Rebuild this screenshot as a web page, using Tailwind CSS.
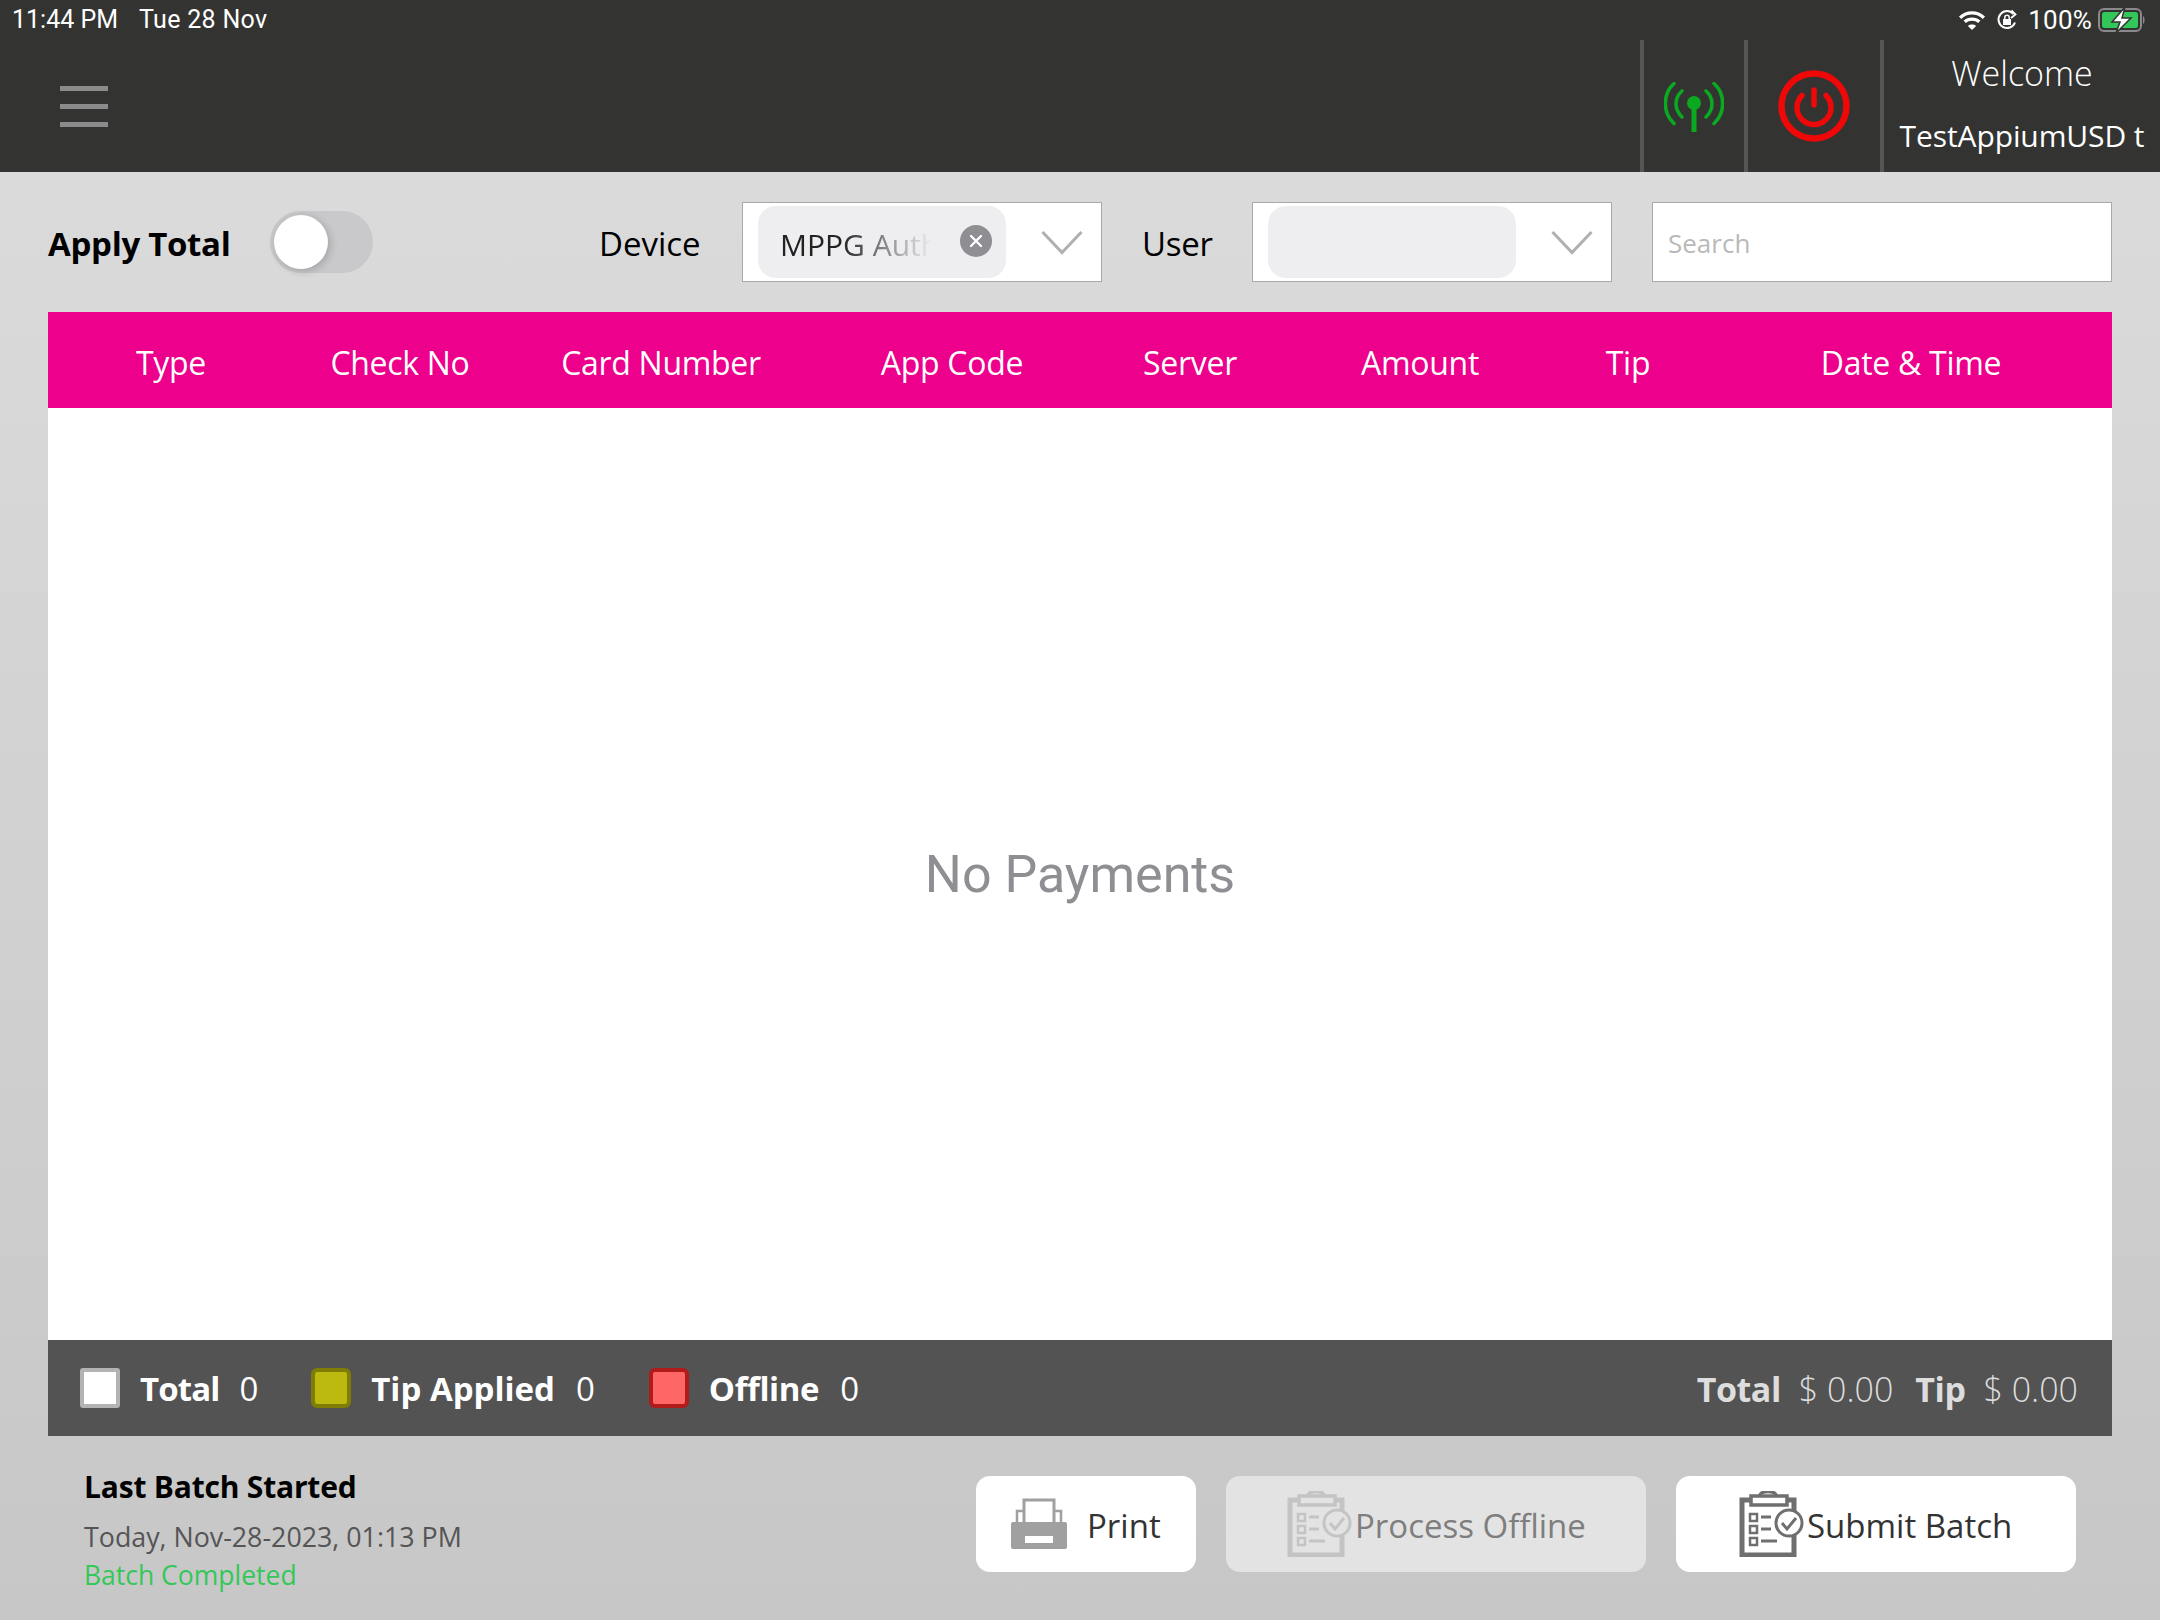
<!DOCTYPE html>
<html><head><meta charset="utf-8"><script src="https://cdn.jsdelivr.net/npm/@tailwindcss/browser@4"></script></head>
<body class="m-0">
<div class="w-[2160px] h-[1620px] flex flex-col overflow-hidden font-['Open_Sans',sans-serif] bg-gradient-to-b from-[#dddddd] to-[#c7c7c7] text-black">
  <header class="h-[172px] shrink-0 bg-[#333332] relative flex">
    <div class="absolute left-[12px] top-[4px] h-[32px] flex items-center gap-[21px] text-[25px] text-white font-['Roboto',sans-serif]"><span>11:44 PM</span><span class="tracking-[0.3px]">Tue 28 Nov</span></div>
    <div class="absolute right-[14px] top-[4px] h-[32px] flex items-center text-white">
      <svg class="w-[28px] h-[22px] mr-[10px]" viewBox="0 0 30 24" fill="none" stroke="#fff" stroke-width="3.6"><path d="M2 9.500C9.500 2.500 20.500 2.500 28 9.500"/><path d="M7 14C11.500 10 18.500 10 23 14"/><path d="M15 23l-4.500-4.500c2.500-2 6.500-2 9 0z" fill="#fff" stroke="none"/></svg>
      <svg class="w-[22px] h-[22px] mr-[10px]" viewBox="0 0 22 22" fill="none" stroke="#fff" stroke-width="2"><path d="M19 13.500A8.500 8.500 0 1 1 17.500 5"/><path d="M15.500 1.500L19.500 5.500 15 9" stroke-width="1.800"/><rect x="7" y="10" width="8" height="6" fill="#fff" stroke="none"/><path d="M8.800 10V8.500a2.200 2.200 0 0 1 4.400 0V10" stroke-width="1.500"/></svg>
      <span class="text-[26px] tracking-[0.2px] font-['Roboto',sans-serif] mr-[6px]">100%</span>
      <svg class="w-[48px] h-[26px]" viewBox="0 0 48 26" fill="none"><rect x="1" y="2" width="42" height="22" rx="5" stroke="#8a8a8a" stroke-width="2"/><rect x="4" y="5" width="36" height="16" rx="2.500" fill="#33c759"/><path d="M45 9c2 .5 2 7.500 0 8z" fill="#8a8a8a"/><path d="M27 0L14 15h8l-4 11 15-15h-9z" fill="#fff" stroke="#333332" stroke-width="1.500"/></svg>
    </div>
    <button class="absolute left-[60px] top-[86px] w-[48px] flex flex-col gap-[13px]"><span class="block h-[5px] bg-[#8b8b8b]"></span><span class="block h-[5px] bg-[#8b8b8b]"></span><span class="block h-[5px] bg-[#8b8b8b]"></span></button>
    <div class="ml-auto mt-[40px] h-[132px] flex">
      <div class="w-[104px] border-l-[4px] border-[#555555] flex items-center justify-center">
        <svg class="w-[60px] h-[50px] mt-[2px]" viewBox="0 0 60 50" fill="none" stroke="#0aa91f" stroke-width="3.600" stroke-linecap="round"><path d="M10 1.500C-1.500 12 -1.500 31 10 41.500"/><path d="M18 9C10 16 10 27 18 35"/><path d="M50 1.500C61.500 12 61.500 31 50 41.500"/><path d="M42 9C50 16 50 27 42 35"/><circle cx="30" cy="21" r="7" fill="#0aa91f" stroke="none"/><rect x="27.500" y="22" width="5" height="28" fill="#0aa91f" stroke="none"/></svg>
      </div>
      <div class="w-[136px] border-l-[4px] border-[#555555] flex items-center justify-center">
        <svg class="w-[72px] h-[72px] ml-[-1px]" viewBox="0 0 72 72" fill="none" stroke="#ee0808" stroke-linecap="round"><circle cx="36" cy="36" r="32.500" stroke-width="6.500"/><path d="M24 25.500a17 17 0 1 0 24 0" stroke-width="5.500"/><path d="M36 20v15" stroke-width="5.500"/></svg>
      </div>
      <div class="w-[280px] border-l-[4px] border-[#555555] flex flex-col items-center text-white">
        <span class="text-[34px] leading-[44px] mt-[11px] font-light">Welcome</span>
        <span class="text-[30px] leading-[44px] mt-[19px] whitespace-nowrap tracking-[-0.1px]">TestAppiumUSD t</span>
      </div>
    </div>
  </header>

  <div class="h-[140px] shrink-0 flex items-center pl-[48px] pr-[48px] relative">
    <span class="text-[33px] font-bold w-[222px] tracking-[-0.3px] whitespace-nowrap mt-[4px]">Apply Total</span>
    <div class="w-[103px] h-[62px] rounded-full bg-[#c9c9cc] relative"><span class="absolute left-[4px] top-[4px] w-[54px] h-[54px] rounded-full bg-white shadow-[2px_2px_8px_rgba(0,0,0,0.2)]"></span></div>
    <span class="text-[33px] ml-[226px] w-[143px] font-medium mt-[4px]">Device</span>
    <div class="w-[360px] h-[80px] bg-white border border-[#a9a9a9] relative flex items-center pl-[15px]">
      <div class="w-[248px] h-[72px] rounded-[18px] bg-[#eeeef0] relative flex items-center pl-[22px]">
        <span class="w-[152px] overflow-hidden whitespace-nowrap text-[30px] text-[#222] [mask-image:linear-gradient(to_right,black_40%,rgba(0,0,0,0.4)_75%,transparent)] mt-[4px]">MPPG Auth</span>
        <span class="absolute left-[202px] top-[19px] w-[32px] h-[32px] rounded-full bg-[#8e8e93] flex items-center justify-center"><svg class="w-[14px] h-[14px]" viewBox="0 0 14 14" stroke="#fff" stroke-width="2.400" stroke-linecap="round"><path d="M2 2l10 10M12 2L2 12"/></svg></span>
      </div>
      <svg class="absolute left-[298px] top-[27px] w-[42px] h-[25px]" viewBox="0 0 42 25" fill="none" stroke="#b0b0b0" stroke-width="3"><path d="M1.500 2L21 22.500 40.500 2"/></svg>
    </div>
    <span class="text-[33px] ml-[40px] w-[110px] font-medium mt-[4px] tracking-[-0.3px]">User</span>
    <div class="w-[360px] h-[80px] bg-white border border-[#a9a9a9] relative flex items-center pl-[15px]">
      <div class="w-[248px] h-[72px] rounded-[18px] bg-[#eeeef0]"></div>
      <svg class="absolute left-[298px] top-[27px] w-[42px] h-[25px]" viewBox="0 0 42 25" fill="none" stroke="#b0b0b0" stroke-width="3"><path d="M1.500 2L21 22.500 40.500 2"/></svg>
    </div>
    <div class="ml-[40px] w-[460px] h-[80px] bg-white border border-[#a9a9a9] flex items-center pl-[15px] pt-[2px] text-[26px] text-[#b9b9b9]">Search</div>
  </div>

  <main class="mx-[48px] flex-1 flex flex-col min-h-0">
    <div class="h-[96px] shrink-0 bg-[#ec008c] flex items-center text-white text-[32px] text-center tracking-[-0.3px] font-medium pt-[5px]">
      <span class="w-[246px]">Type</span><span class="w-[212px]">Check No</span><span class="w-[310px]">Card Number</span><span class="w-[272px]">App Code</span><span class="w-[204px]">Server</span><span class="w-[256px]">Amount</span><span class="w-[160px]">Tip</span><span class="w-[404px] pl-[2px]">Date &amp; Time</span>
    </div>
    <div class="flex-1 bg-white flex items-center justify-center text-[52px] text-[#8e8e93] font-['Roboto',sans-serif] pt-[2px]">No Payments</div>
    <div class="h-[96px] shrink-0 bg-[#535353] flex items-center pl-[32px] pr-[34px] text-white text-[33px]">
      <span class="w-[40px] h-[40px] rounded-[3px] bg-white border-[4px] border-[#b3b3b3] mr-[20px]"></span><b class="tracking-[-0.9px] mt-[2px]">Total</b><span class="ml-[20px] mt-[2px]">0</span>
      <span class="w-[40px] h-[40px] rounded-[6px] bg-[#bcb90f] border-[4px] border-[#7f7d06] ml-[53px] mr-[20px]"></span><b class="tracking-[0px] mt-[2px]">Tip Applied</b><span class="ml-[21px] mt-[2px]">0</span>
      <span class="w-[40px] h-[40px] rounded-[6px] bg-[#ff6666] border-[4px] border-[#b01c1c] ml-[54px] mr-[20px]"></span><b class="tracking-[-0.4px] mt-[2px]">Offline</b><span class="ml-[21px] mt-[2px]">0</span>
      <div class="ml-auto flex items-center text-[#dddddd] text-[34px] mt-[2px]"><b class="tracking-[-0.5px]">Total</b><span class="ml-[18px] font-light">$ 0.00</span><b class="ml-[22px] tracking-[-0.5px]">Tip</b><span class="ml-[18px] font-light">$ 0.00</span></div>
    </div>
    <div class="h-[184px] shrink-0 flex">
      <div class="ml-[36px] pt-[31px] flex flex-col">
        <span class="text-[30px] font-bold leading-[40px] tracking-[-0.2px]">Last Batch Started</span>
        <span class="text-[26.800px] leading-[38px] mt-[11px] text-[#555555]">Today, Nov-28-2023, 01:13 PM</span>
        <span class="text-[26.500px] leading-[38px] text-[#34c759]">Batch Completed</span>
      </div>
      <div class="ml-auto mr-[36px] mt-[40px] h-[96px] flex text-[33px]">
        <button class="w-[220px] h-[96px] rounded-[14px] bg-white flex items-center pl-[33px] text-[#333] pt-[3px]">
          <svg class="w-[60px] h-[52px] mr-[18px] mt-[-3px]" viewBox="0 0 60 52" fill="none" stroke="#a0a0a0" stroke-width="3"><path d="M15 24V2h30v22"/><path d="M15 13H8v12M45 13h7v12" stroke-width="2.500"/><rect x="2" y="24" width="56" height="27" rx="2" fill="#a0a0a0" stroke="none"/><rect x="15" y="37" width="30" height="9" fill="#fff" stroke="#a0a0a0" stroke-width="2"/></svg>
          <span>Print</span>
        </button>
        <button class="w-[420px] h-[96px] rounded-[14px] bg-[#e3e3e3] ml-[30px] flex items-center pl-[61px] text-[#7e7e7e]">
          <svg class="w-[66px] h-[66px] shrink-0" viewBox="0 0 66 66" fill="none" stroke="#c4c4c4"><path d="M3 9h52v55H3z" fill="#e3e3e3" stroke-width="5"/><path d="M12 5h36v9H12z" fill="#e3e3e3" stroke-width="3.500"/><path d="M21 5c0-6 16-6 16 0" stroke-width="3.500"/><path d="M11 23h7v7h-7zM11 35h7v7h-7zM11 47h7v7h-7z" stroke-width="2.500"/><path d="M22 26h10M22 38h10M22 50h16" stroke-width="3"/><circle cx="50" cy="32" r="13" fill="#e3e3e3" stroke-width="3"/><path d="M43 32l5 6 9-11" stroke-width="3"/></svg>
          <span class="whitespace-nowrap mt-[3px] ml-[2px]">Process Offline</span>
        </button>
        <button class="w-[400px] h-[96px] rounded-[14px] bg-white ml-[30px] flex items-center pl-[63px] text-[#333]">
          <svg class="w-[66px] h-[66px] shrink-0" viewBox="0 0 66 66" fill="none" stroke="#6f6f6f"><path d="M3 9h52v55H3z" fill="#fff" stroke-width="5"/><path d="M12 5h36v9H12z" fill="#fff" stroke-width="3.500"/><path d="M21 5c0-6 16-6 16 0" stroke-width="3.500"/><path d="M11 23h7v7h-7zM11 35h7v7h-7zM11 47h7v7h-7z" stroke-width="2.500"/><path d="M22 26h10M22 38h10M22 50h16" stroke-width="3"/><circle cx="50" cy="32" r="13" fill="#fff" stroke-width="3"/><path d="M43 32l5 6 9-11" stroke-width="3"/></svg>
          <span class="whitespace-nowrap mt-[3px] ml-[2px]">Submit Batch</span>
        </button>
      </div>
    </div>
  </main>
</div>
</body></html>
